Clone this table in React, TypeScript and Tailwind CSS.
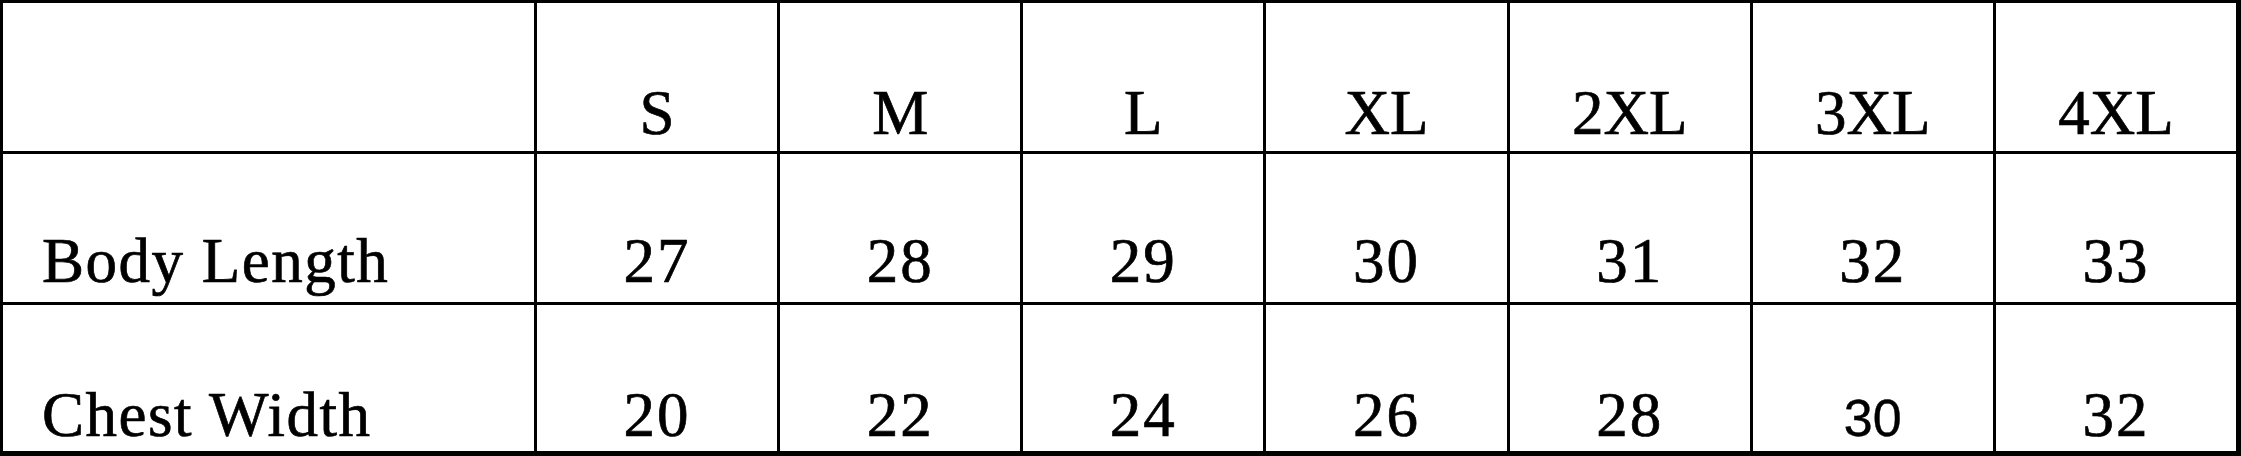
const sizes = ["S", "M", "L", "XL", "2XL", "3XL", "4XL"];

const rows = [
  { label: "Body Length", values: ["27", "28", "29", "30", "31", "32", "33"], pad: "pb-[9px]" },
  { label: "Chest Width", values: ["20", "22", "24", "26", "28", "30", "32"], pad: "pb-[4px]" },
];

const serif =
  "font-['Liberation_Serif',serif] text-[63px] leading-none text-black [-webkit-text-stroke:0.7px_black]";

const App = () => {
  return (
    <div className="w-[2241px] h-[456px] bg-white">
      <div className="w-full h-full bg-black pt-[3px] pl-[3px] pr-[5px] pb-[5px]">
        <div className="grid h-full grid-cols-[531px_repeat(7,1fr)] grid-rows-[148px_148px_1fr] gap-[3px]">
          {/* header row */}
          <div className="bg-white" />
          {sizes.map((s) => (
            <div key={s} className="bg-white flex items-end justify-center pb-[6px]">
              <span className={serif}>{s}</span>
            </div>
          ))}

          {rows.map((row) => (
            <>
              <div key={row.label} className={`bg-white flex items-end pl-[39px] ${row.pad}`}>
                <span className={`${serif} tracking-[1.5px]`}>{row.label}</span>
              </div>
              {row.values.map((v, i) => {
                // the 3XL chest value is set in a different, sans face in the source
                const odd = row.label === "Chest Width" && i === 5;
                return (
                  <div
                    key={row.label + i}
                    className={`bg-white flex items-end justify-center ${odd ? "pb-[7px]" : row.pad}`}
                  >
                    {odd ? (
                      <span className="font-['Liberation_Sans',sans-serif] text-[52px] leading-none text-black [-webkit-text-stroke:0.4px_black]">
                        {v}
                      </span>
                    ) : (
                      <span className={`${serif} tracking-[2px]`}>{v}</span>
                    )}
                  </div>
                );
              })}
            </>
          ))}
        </div>
      </div>
    </div>
  );
};

export default App;
